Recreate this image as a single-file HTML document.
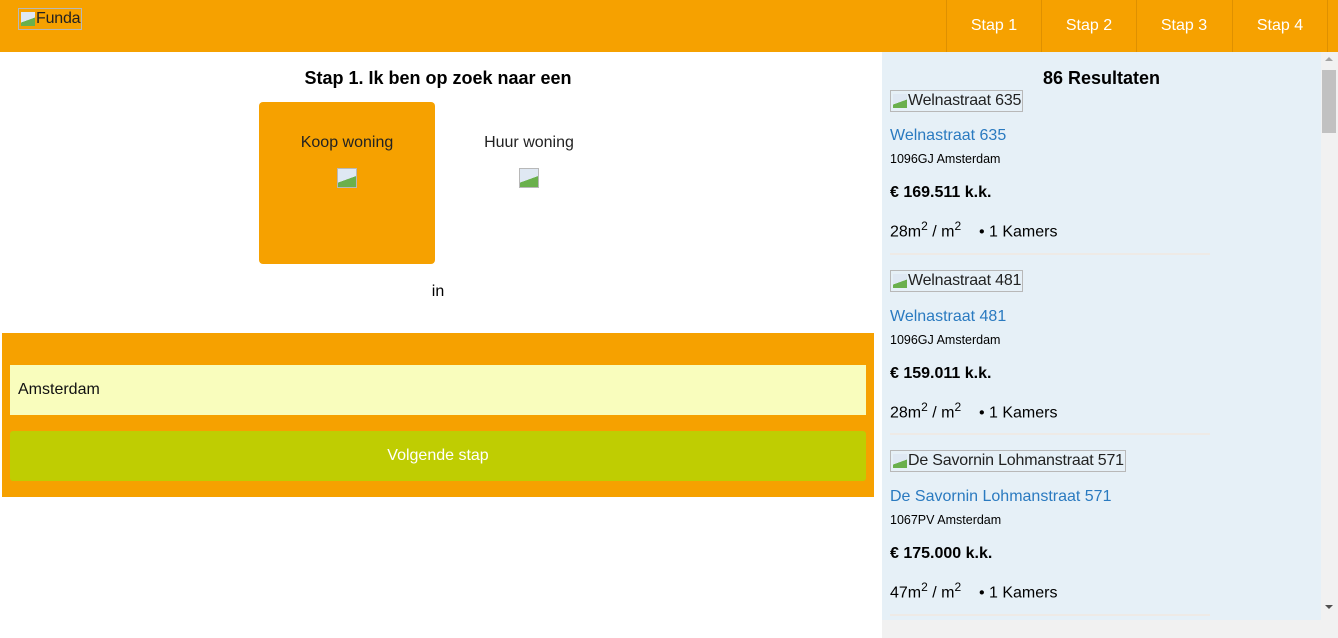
<!DOCTYPE html>
<html><head><meta charset="utf-8"><style>
*{margin:0;padding:0;box-sizing:border-box}
body{width:1338px;height:638px;overflow:hidden;background:#fff;font-family:"Liberation Sans",Arial,sans-serif;position:relative;color:#000}
.a{position:absolute}
.nav{left:0;top:0;width:1338px;height:52px;background:#f6a100}
.navi{top:0;height:52px;width:95px;border-left:1px solid #de9000;color:#fff;font-size:16px;text-align:center;line-height:52px}
.broken{display:inline-block;border:1px solid #b8b8b8;height:22px;line-height:20px;font-size:16px;padding:0 1px 0 17px;position:relative;color:#222;letter-spacing:-0.2px}
.broken:before{content:"";position:absolute;left:2px;top:3px;width:14px;height:14px;background:linear-gradient(160deg,#dfe8f3 55%,#6ab04c 56%)}
.ib{width:20px;height:20px;border:1px solid #b8b8b8;background:linear-gradient(160deg,#dfe8f3 55%,#6ab04c 56%)}
.panel{left:882px;top:52px;width:439px;height:568px;background:#e6f0f7}
.sb{left:1321px;top:52px;width:17px;height:586px;background:#f1f1f1}
.hb{left:882px;top:620px;width:439px;height:18px;background:#f1f1f1}
.lk{color:#2a7ac0;font-size:16px}
.sm{font-size:12.5px}
.pr{font-weight:bold;font-size:16px}
.m{font-size:16px}
sup{font-size:12px}
.hr{height:2px;background:#eeeae6;width:320px}
</style></head><body>
<div class="a nav"></div>
<div class="a" style="left:18px;top:8px"><span class="broken">Funda</span></div>
<div class="a navi" style="left:946px">Stap 1</div>
<div class="a navi" style="left:1041px">Stap 2</div>
<div class="a navi" style="left:1136px">Stap 3</div>
<div class="a navi" style="left:1232px">Stap 4</div>
<div class="a" style="left:1327px;top:0;height:52px;border-left:1px solid #de9000"></div>

<div class="a" style="left:0;top:68px;width:876px;text-align:center;font-weight:bold;font-size:18px">Stap 1. Ik ben op zoek naar een</div>
<div class="a" style="left:259px;top:102px;width:176px;height:162px;background:#f6a100;border-radius:4px"></div>
<div class="a" style="left:259px;top:134px;width:176px;text-align:center;font-size:16px;color:#222">Koop woning</div>
<div class="a ib" style="left:337px;top:168px"></div>
<div class="a" style="left:441px;top:134px;width:176px;text-align:center;font-size:16px;color:#222">Huur woning</div>
<div class="a ib" style="left:519px;top:168px"></div>
<div class="a" style="left:0;top:283px;width:876px;text-align:center;font-size:16px">in</div>

<div class="a" style="left:2px;top:333px;width:872px;height:164px;background:#f6a100"></div>
<div class="a" style="left:10px;top:365px;width:856px;height:50px;background:#f9fdbd;font-size:16px;line-height:50px;padding-left:8px;color:#111">Amsterdam</div>
<div class="a" style="left:10px;top:431px;width:856px;height:50px;background:#bfcd02;border-radius:3px;color:#fff;font-size:16px;line-height:50px;text-align:center">Volgende stap</div>

<div class="a panel"></div>
<div class="a sb"></div>
<div class="a" style="left:1322px;top:70px;width:14px;height:63px;background:#c1c1c1"></div>
<div class="a" style="left:1325px;top:57px;width:0;height:0;border:4px solid transparent;border-bottom-color:#a3a3a3;border-top:0"></div>
<div class="a" style="left:1325px;top:605px;width:0;height:0;border:4px solid transparent;border-top-color:#505050;border-bottom:0"></div>
<div class="a hb"></div>
<div class="a" style="left:882px;top:68px;width:439px;text-align:center;font-weight:bold;font-size:18px">86 Resultaten</div>

<div class="a" style="left:890px;top:90px"><span class="broken">Welnastraat 635</span></div>
<div class="a lk" style="left:890px;top:127px">Welnastraat 635</div>
<div class="a sm" style="left:890px;top:152px">1096GJ Amsterdam</div>
<div class="a pr" style="left:890px;top:184px">€ 169.511 k.k.</div>
<div class="a m" style="left:890px;top:219px">28m<sup>2</sup> / m<sup>2</sup> &nbsp;&nbsp;&nbsp;• 1 Kamers</div>
<div class="a hr" style="left:890px;top:253px"></div>

<div class="a" style="left:890px;top:270px"><span class="broken">Welnastraat 481</span></div>
<div class="a lk" style="left:890px;top:308px">Welnastraat 481</div>
<div class="a sm" style="left:890px;top:333px">1096GJ Amsterdam</div>
<div class="a pr" style="left:890px;top:365px">€ 159.011 k.k.</div>
<div class="a m" style="left:890px;top:400px">28m<sup>2</sup> / m<sup>2</sup> &nbsp;&nbsp;&nbsp;• 1 Kamers</div>
<div class="a hr" style="left:890px;top:433px"></div>

<div class="a" style="left:890px;top:450px"><span class="broken">De Savornin Lohmanstraat 571</span></div>
<div class="a lk" style="left:890px;top:488px">De Savornin Lohmanstraat 571</div>
<div class="a sm" style="left:890px;top:513px">1067PV Amsterdam</div>
<div class="a pr" style="left:890px;top:545px">€ 175.000 k.k.</div>
<div class="a m" style="left:890px;top:580px">47m<sup>2</sup> / m<sup>2</sup> &nbsp;&nbsp;&nbsp;• 1 Kamers</div>
<div class="a hr" style="left:890px;top:614px"></div>
<div class="a hb"></div>
</body></html>
